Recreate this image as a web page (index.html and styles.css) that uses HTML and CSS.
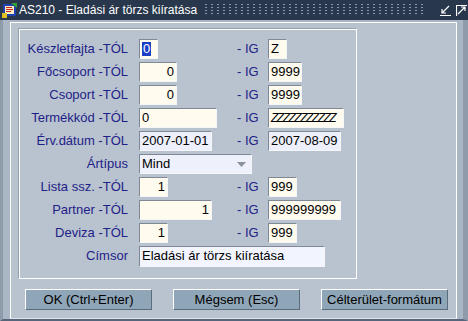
FILE: index.html
```html
<!DOCTYPE html>
<html lang="hu">
<head>
    <meta charset="UTF-8">
    <title>AS210 - Eladási ár törzs kiíratása</title>
    <link rel="stylesheet" href="styles.css">
</head>
<body>
<div class="window">
    <div class="titlebar">
        <svg class="app-icon" width="16" height="16" viewBox="0 0 16 16">
            <rect x="1" y="2" width="13" height="12" fill="#2040b0"/>
            <rect x="3" y="4" width="9" height="8" fill="#f8f0c0"/>
            <rect x="4" y="5" width="6" height="1" fill="#d02020"/>
            <rect x="4" y="7" width="7" height="1" fill="#d02020"/>
            <rect x="4" y="9" width="5" height="1" fill="#d02020"/>
            <path d="M9 1 L15 1 L15 6 Z" fill="#30a030"/>
            <rect x="0" y="11" width="5" height="5" fill="#e0c020"/>
        </svg>
        <span class="title">AS210 - Eladási ár törzs kiíratása</span>
        <span class="dots"></span>
        <svg class="tb-btn" width="11" height="11" viewBox="0 0 11 11">
            <path d="M9 1 L2 8 M2 4 L2 8 L6 8 M0 10.5 L11 10.5" stroke="#fff" stroke-width="1.2" fill="none"/>
        </svg>
        <svg class="tb-btn" width="11" height="11" viewBox="0 0 11 11">
            <path d="M2 9 L9 2 M5 2 L9 2 L9 6 M0.5 11 L0.5 0.5 L11 0.5" stroke="#fff" stroke-width="1.2" fill="none"/>
        </svg>
    </div>
    <div class="frame">
        <div class="client">
            <div class="panel">
                <div class="form">
                    <div class="lbl">Készletfajta -TÓL</div>
                    <div class="field cream w19"><span class="sel">0</span></div>
                    <div class="ig">- IG</div>
                    <div class="field cream w19">Z</div>

                    <div class="lbl">Főcsoport -TÓL</div>
                    <div class="field cream w38 right">0</div>
                    <div class="ig">- IG</div>
                    <div class="field cream w34">9999</div>

                    <div class="lbl">Csoport -TÓL</div>
                    <div class="field cream w38 right">0</div>
                    <div class="ig">- IG</div>
                    <div class="field cream w34">9999</div>

                    <div class="lbl">Termékkód -TÓL</div>
                    <div class="field cream w78">0</div>
                    <div class="ig">- IG</div>
                    <div class="field cream w76 zz">ZZZZZZZZZZZ</div>

                    <div class="lbl">Érv.dátum -TÓL</div>
                    <div class="field lilac w73">2007-01-01</div>
                    <div class="ig">- IG</div>
                    <div class="field lilac w73">2007-08-09</div>

                    <div class="lbl">Ártípus</div>
                    <div class="field select wide">
                        <span>Mind</span>
                        <svg width="9" height="5" viewBox="0 0 9 5"><path d="M0 0 L9 0 L4.5 5 Z" fill="#8a929c"/></svg>
                    </div>

                    <div class="lbl">Lista ssz. -TÓL</div>
                    <div class="field cream w29 right">1</div>
                    <div class="ig">- IG</div>
                    <div class="field cream w29">999</div>

                    <div class="lbl">Partner -TÓL</div>
                    <div class="field cream w73 right">1</div>
                    <div class="ig">- IG</div>
                    <div class="field cream w73">999999999</div>

                    <div class="lbl">Deviza -TÓL</div>
                    <div class="field cream w29 right">1</div>
                    <div class="ig">- IG</div>
                    <div class="field cream w29">999</div>

                    <div class="lbl">Címsor</div>
                    <div class="field pale cimsor">Eladási ár törzs kiíratása</div>
                </div>
            </div>
            <div class="buttons">
                <div class="btn">OK (Ctrl+Enter)</div>
                <div class="btn">Mégsem (Esc)</div>
                <div class="btn">Célterület-formátum</div>
            </div>
        </div>
    </div>
</div>
</body>
</html>
```

FILE: styles.css
```css
body {
    margin: 0;
    padding: 0;
    font-family: "Liberation Sans", Arial, sans-serif;
    background-color: #a9b5c2;
}
.window {
    width: 468px;
    height: 321px;
    overflow: hidden;
}
.titlebar {
    height: 20px;
    background: #28374c;
    display: flex;
    align-items: center;
    padding: 0 1px 0 2px;
    box-sizing: border-box;
}
.app-icon {
    flex: none;
}
.title {
    color: #ffffff;
    font-size: 12px;
    margin-left: 1px;
    white-space: nowrap;
}
.dots {
    display: block;
    flex: 1;
    height: 12px;
    margin: 0 8px 0 8px;
    background-color: #2b3a50;
    background-image:
        linear-gradient(90deg, transparent 2px, #28374c 2px),
        linear-gradient(#8797ad 1px, transparent 1px);
    background-size: 6px 3px, 6px 3px;
    background-position: 0 0, 0 0;
    background-repeat: repeat;
}
.tb-btn {
    flex: none;
    margin-left: 5px;
}
.frame {
    height: 301px;
    box-sizing: border-box;
    padding: 2px 6px 0 7px;
    border-left: 3px solid #8e9bab;
    border-right: 5px solid #8e9bab;
    border-bottom: 2px solid #56657a;
    background: #aab6c3;
}
.client {
    width: 447px;
    height: 297px;
    box-sizing: border-box;
    border: 1px solid #ffffff;
    border-bottom-color: #dfe5eb;
    background: #b9c3cf;
    padding: 6px 0 0 8px;
}
.panel {
    width: 338px;
    height: 250px;
    box-sizing: border-box;
    border: 1px solid #ffffff;
    box-shadow: -1px -1px 0 #939fad;
    padding-top: 9px;
}
.form {
    display: grid;
    grid-template-columns: 119px 98px 31px 1fr;
    grid-auto-rows: 20px;
    row-gap: 3px;
}
.lbl {
    grid-column: 1;
    text-align: right;
    padding-right: 11px;
    font-size: 13px;
    line-height: 20px;
    color: #1e2288;
    white-space: nowrap;
}
.ig {
    font-size: 13px;
    line-height: 20px;
    color: #1e2288;
}
.field {
    height: 20px;
    box-sizing: border-box;
    border: 1px solid;
    border-color: #7f8995 #f4f6f8 #f4f6f8 #7f8995;
    font-size: 13px;
    line-height: 18px;
    padding: 0 2px;
    color: #000000;
    white-space: nowrap;
    overflow: hidden;
}
.cream {
    background: #fffbee;
}
.lilac {
    background: #edf0fb;
}
.pale {
    background: #f2f5ff;
}
.right {
    text-align: right;
}
.w19 { width: 19px; }
.w29 { width: 29px; }
.w34 { width: 34px; }
.w38 { width: 38px; }
.w73 { width: 73px; }
.w76 { width: 76px; }
.w78 { width: 78px; }
.zz {
    letter-spacing: -1.5px;
    font-style: italic;
    font-size: 12px;
}
.sel {
    background: #1b3fc4;
    color: #ffffff;
    display: inline-block;
    line-height: 14px;
    padding: 0 1px;
}
.select {
    grid-column: 2 / 5;
    width: 113px;
    background: #eef0fb;
    display: flex;
    align-items: center;
    justify-content: space-between;
    padding-right: 5px;
}
.cimsor {
    grid-column: 2 / 5;
    width: 186px;
    height: 21px;
}
.buttons {
    display: flex;
    gap: 21px;
    margin-top: 10px;
    padding-left: 6px;
}
.btn {
    width: 127px;
    height: 21px;
    box-sizing: border-box;
    background: #8fa6b8;
    border: 1px solid;
    border-color: #ffffff #5b6c7c #5b6c7c #ffffff;
    font-size: 13px;
    line-height: 19px;
    text-align: center;
    color: #000000;
}
```
